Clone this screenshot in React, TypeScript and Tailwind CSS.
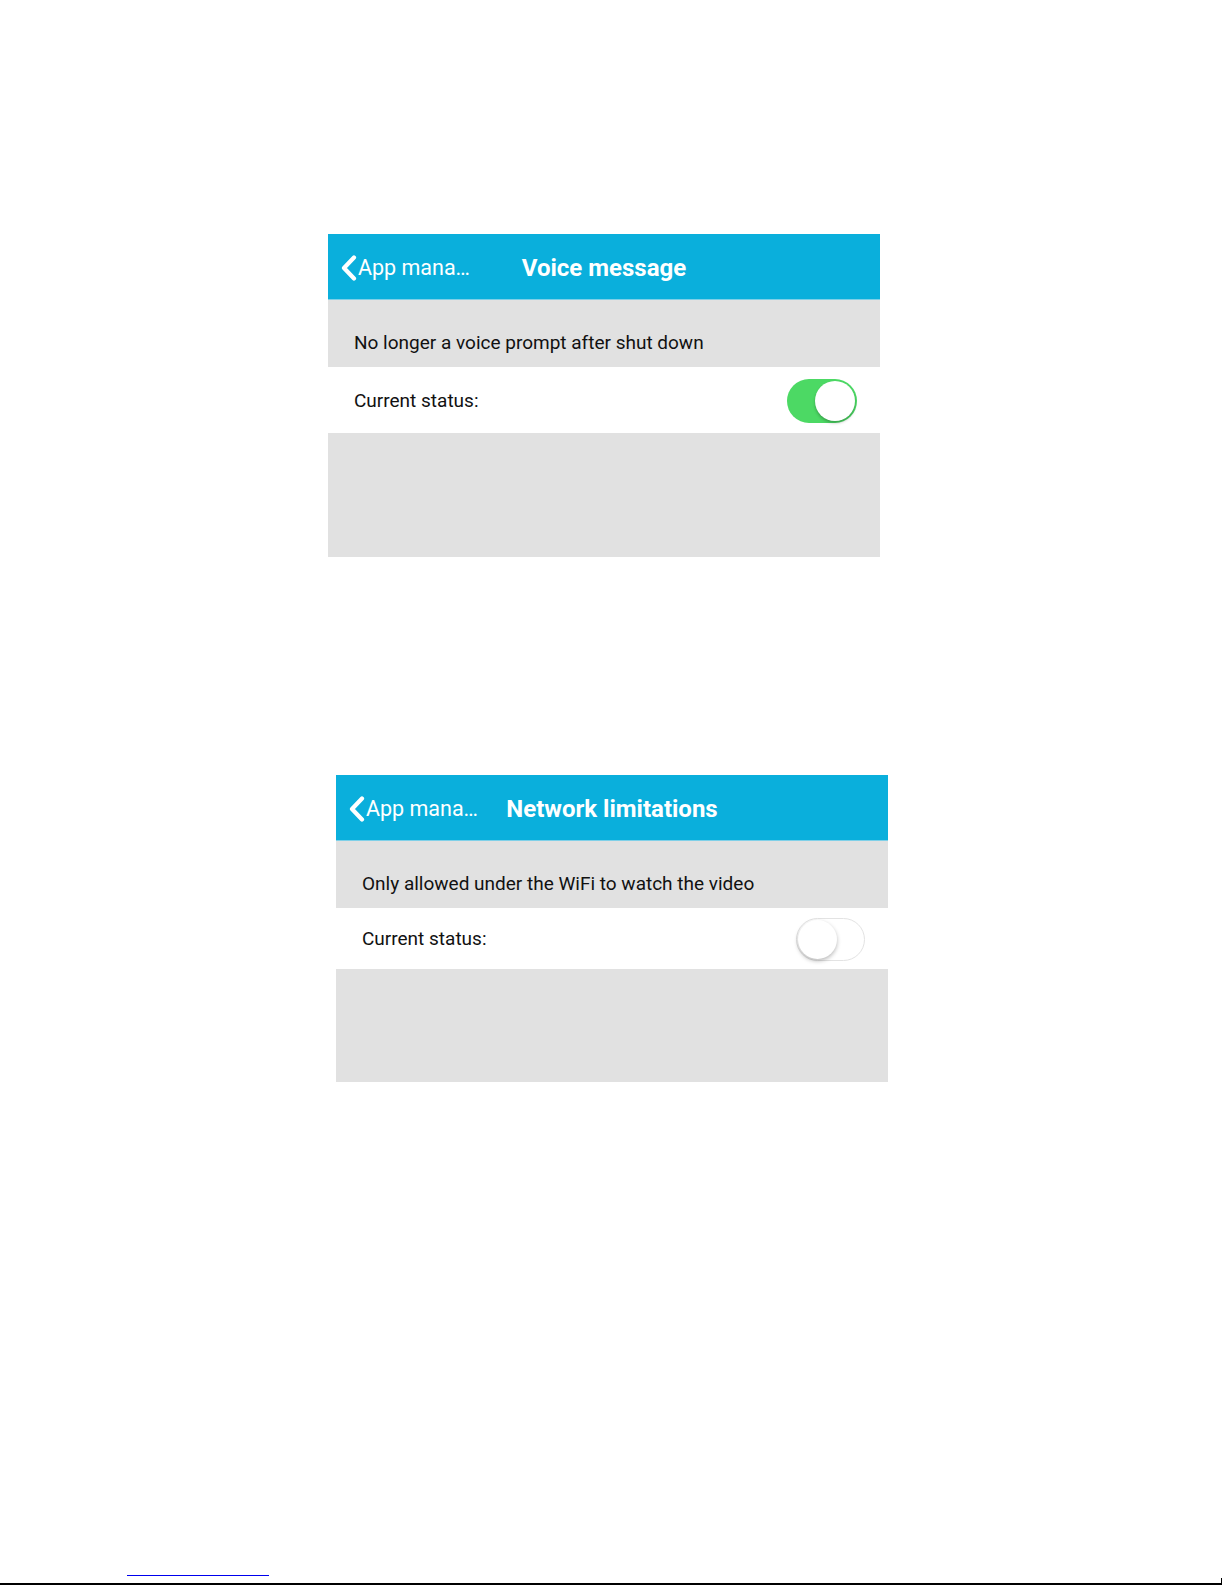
import React from "react";

function Chevron() {
  return (
    <svg width="17" height="26" viewBox="0 0 17 26" className="shrink-0">
      <polyline points="14,2.5 4,13 14,23.5" fill="none" stroke="#ffffff" strokeWidth="4.2" strokeLinecap="round" strokeLinejoin="round" />
    </svg>
  );
}

function Toggle({ on }: { on: boolean }) {
  if (on) {
    return (
      <div className="flex h-[44px] w-[70px] items-center justify-end rounded-full bg-[#4cd964] p-[2px]">
        <div className="h-[40px] w-[40px] rounded-full bg-white shadow-[0_2px_3px_rgba(0,0,0,0.25)]" />
      </div>
    );
  }
  return (
    <div className="flex h-[43px] w-[69px] items-center justify-start rounded-full border-[1.5px] border-[#e3e3e3] bg-white p-[1px]">
      <div className="h-[39px] w-[39px] rounded-full bg-white shadow-[0_2px_4px_rgba(0,0,0,0.28)]" />
    </div>
  );
}

function Panel({
  title,
  desc,
  on,
  back,
  rowH,
  bottomH,
}: {
  title: string;
  desc: string;
  on: boolean;
  back: string;
  rowH: string;
  bottomH: string;
}) {
  return (
    <div className="flex w-[552px] flex-col" style={{ fontFamily: "Roboto, 'Liberation Sans', sans-serif" }}>
      <div className="relative flex h-[66px] items-center border-b border-[#7fd0e8] bg-[#0aafdc] pt-[3px]">
        <div className="flex items-center pl-[12px] text-[21.5px] leading-none text-white">
          <Chevron />
          <span className="ml-[1px]">{back}</span>
        </div>
        <div className="absolute inset-0 flex items-center justify-center pt-[3px] text-[24px] font-bold text-white">
          <span>{title}</span>
        </div>
      </div>
      <div className="bg-[#e1e1e1] pl-[26px] pt-[31px] pb-[12px] text-[19px] leading-[24px] text-[#111]">{desc}</div>
      <div className={`flex items-center justify-between bg-white pl-[26px] pr-[23px] pt-[2px] text-[19px] text-[#111] ${rowH}`}>
        <span>Current status:</span>
        <Toggle on={on} />
      </div>
      <div className={`bg-[#e1e1e1] ${bottomH}`} />
    </div>
  );
}

export default function App() {
  return (
    <div className="flex h-[1585px] w-full flex-col bg-white">
      <div className="ml-[328px] mt-[234px]">
        <Panel
          title="Voice message"
          desc="No longer a voice prompt after shut down"
          on={true}
          back="App mana…"
          rowH="h-[66px]"
          bottomH="h-[124px]"
        />
      </div>
      <div className="ml-[336px] mt-[218px]">
        <Panel
          title="Network limitations"
          desc="Only allowed under the WiFi to watch the video"
          on={false}
          back="App mana…"
          rowH="h-[61px]"
          bottomH="h-[113px]"
        />
      </div>
      <div className="mt-auto ml-[127px] h-px w-[142px] bg-[#0000ee]" />
      <div className="mt-[2px] h-[7px] w-[1222px] border-b-2 border-r border-black" />
    </div>
  );
}
